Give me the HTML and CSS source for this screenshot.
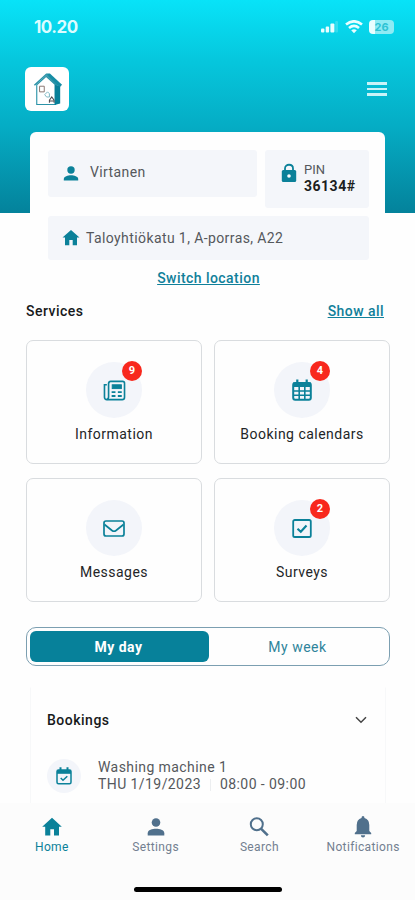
FILE: index.html
```html
<!DOCTYPE html>
<html lang="en">
<head>
  <meta charset="UTF-8" />
  <meta name="viewport" content="width=device-width, initial-scale=1.0" />
  <title>Home</title>
  <link rel="stylesheet" href="styles.css">
</head>
<body>
  <header class="header">
    <div class="status">
      <span class="time">10.20</span>
      <div class="status-icons">
        <svg width="17" height="12" viewBox="0 0 17 12" fill="#e9feff"><rect x="0" y="7.5" width="3.4" height="4" rx="1"/><rect x="4.7" y="5.5" width="3.4" height="6" rx="1"/><rect x="9.4" y="2.5" width="4" height="9" rx="1"/><rect x="14.2" y="0" width="2.8" height="11.5" rx="1" opacity=".2"/></svg>
        <svg width="18" height="14" viewBox="0 0 18 14" fill="none" stroke="#e9feff" stroke-width="2.6"><path d="M1 4.6Q9-2 17 4.6"/><path d="M4 8Q9 3.8 14 8"/><path d="M6.2 10.2Q9 8.2 11.8 10.2L9 13.2Z" fill="#e9feff" stroke="none"/></svg>
        <div class="battery"><span>26</span></div>
      </div>
    </div>
    <div class="topbar">
      <div class="logo">
        <svg width="30" height="35" viewBox="0 0 32 36">
          <path d="M4 13V34H24V13L14 4Z" fill="#fff" stroke="#2b93a8" stroke-width="1.2"/>
          <path d="M23 13L29 14V33L23 34.5Z" fill="#087f98"/>
          <path d="M14 1L18 1L31 13L29 15L24 13Z" fill="#168da5"/>
          <path d="M1.5 13.5L14 2L25 13" fill="none" stroke="#2b93a8" stroke-width="1.6"/>
          <path d="M7 14.5H12V20.5H7Z" fill="none" stroke="#85716b" stroke-width="1"/>
          <path d="M15.5 20.5L12.5 23.5L14.5 26H17.5V22.5Z" fill="none" stroke="#77b4c0" stroke-width="1"/>
          <path d="M17.5 32V29.5L20 26L22.5 29.5V32M17.5 30.3H22.5" fill="none" stroke="#514b50" stroke-width="1.1"/>
        </svg>
      </div>
      <div class="menu"><i></i><i></i><i></i></div>
    </div>
  </header>

  <section class="profile">
    <div class="profile-row">
      <div class="field name">
        <svg width="24" height="24" viewBox="0 0 24 24" fill="#0b8199"><circle cx="12" cy="8" r="3.7"/><path d="M4.8 18.4V17C4.8 14.3 9 13.2 12 13.2S19.2 14.3 19.2 17V18.4Z"/></svg>
        <span class="name-text">Virtanen</span>
      </div>
      <div class="field pin">
        <svg width="16" height="20" viewBox="0 0 16 20"><path d="M4 8V5.5C4 .5 12 .5 12 5.5V8" fill="none" stroke="#0b8199" stroke-width="1.8"/><rect x=".8" y="7" width="14.4" height="12" rx="1.5" fill="#0b8199"/><circle cx="8" cy="13" r="1.8" fill="#fff"/></svg>
        <div class="pin-text"><span>PIN</span><b>36134#</b></div>
      </div>
    </div>
    <div class="field address">
      <svg width="18" height="16" viewBox="0 0 18 16" fill="#0b8199"><path d="M9 0L17.5 7.6H15V15.2H10.7V10H7.3V15.2H3V7.6H.5Z"/></svg>
      <span class="address-text">Taloyhtiökatu 1, A-porras, A22</span>
    </div>
    <a class="switch">Switch location</a>
  </section>

  <main>
    <div class="section-head">
      <h2>Services</h2>
      <a>Show all</a>
    </div>
    <div class="services">
      <div class="card">
        <div class="circle">
          <svg width="23" height="21" viewBox="0 0 24 22" fill="none" stroke="#0b8199" stroke-width="1.7"><path d="M6 3.5Q6 1.5 8 1.5H20.5Q22.5 1.5 22.5 3.5V18Q22.5 20.5 20 20.5H4Q1.5 20.5 1.5 18V5H4"/><path d="M5.8 3V17.5Q5.8 20 4 20.3"/><rect x="9.6" y="5" width="9.6" height="4" fill="#0b8199" stroke-width="1"/><path d="M9 12.7H13M15.5 12.7H19.6M9 16.7H13M15.5 16.7H19.6" stroke-width="2"/></svg>
          <span class="badge">9</span>
        </div>
        <p>Information</p>
      </div>
      <div class="card">
        <div class="circle">
          <svg width="20" height="22" viewBox="0 0 20 22" fill="none" stroke="#0b8199"><rect x="1.2" y="4" width="17.6" height="16.8" rx="2" stroke-width="2"/><path d="M1 3.5H19V8H1Z" fill="#0b8199" stroke="none"/><path d="M5.3 .5V4M14.7 .5V4" stroke-width="2.2"/><path d="M7.2 7V20M12.8 7V20M2 12H18M2 16.3H18" stroke-width="1.6"/></svg>
          <span class="badge">4</span>
        </div>
        <p>Booking calendars</p>
      </div>
      <div class="card">
        <div class="circle">
          <svg width="22" height="17" viewBox="0 0 22 17" fill="none" stroke="#0b8199" stroke-width="1.7"><rect x="1" y="1" width="20" height="15" rx="2"/><path d="M1.5 4.5L9 10.5Q11 12 13 10.5L20.5 4.5"/></svg>
        </div>
        <p>Messages</p>
      </div>
      <div class="card">
        <div class="circle">
          <svg width="20" height="19" viewBox="0 0 20 19" fill="none" stroke="#0b8199" stroke-width="1.8"><rect x="1.2" y="1" width="17.6" height="17" rx="1.6"/><path d="M5.5 9.7L8.8 12.8L14.5 6.5" stroke-width="2.1"/></svg>
          <span class="badge">2</span>
        </div>
        <p>Surveys</p>
      </div>
    </div>

    <div class="toggle">
      <button class="active">My day</button>
      <button>My week</button>
    </div>

    <section class="bookings">
      <div class="bookings-head">
        <h2>Bookings</h2>
        <svg width="12" height="8" viewBox="0 0 12 8" fill="none" stroke="#444" stroke-width="1.5"><path d="M1 1.2L6 6.2L11 1.2"/></svg>
      </div>
      <div class="booking">
        <div class="circle small">
          <svg width="16" height="18" viewBox="0 0 16 18" fill="none" stroke="#0b8199" stroke-width="1.5"><rect x="1" y="3" width="14" height="13.8" rx="1.5"/><path d="M1 3H15V6.8H1Z" fill="#0b8199" stroke="none"/><path d="M4.5 .3V4M11.5 .3V4" stroke-width="2"/><path d="M4.7 11L7 13.3L11.3 9.2" stroke-width="1.5"/></svg>
        </div>
        <div class="booking-text">
          <span>Washing machine 1</span>
          <div class="booking-time"><span>THU 1/19/2023</span><i></i><span>08:00 - 09:00</span></div>
        </div>
      </div>
    </section>
  </main>

  <nav class="tabs">
    <div class="tab current">
      <svg width="20" height="20" viewBox="0 0 20 20" fill="currentColor"><path d="M10 .8L19.8 9.8H17V18.6H12V12.2H8.3V18.6H3.2V9.8H.2Z"/></svg>
      <span>Home</span>
    </div>
    <div class="tab">
      <svg width="20" height="20" viewBox="0 0 20 20" fill="currentColor"><circle cx="10" cy="5.5" r="4.3"/><path d="M1.7 18.5V16.2C1.7 13 6.5 11.8 10 11.8S18.3 13 18.3 16.2V18.5Z"/></svg>
      <span>Settings</span>
    </div>
    <div class="tab">
      <svg width="20" height="20" viewBox="0 0 20 20" fill="none" stroke="currentColor" stroke-width="2"><circle cx="7.8" cy="7.3" r="6"/><path d="M12.2 11.8L18.8 18.4" stroke-width="2.6"/></svg>
      <span>Search</span>
    </div>
    <div class="tab">
      <svg width="20" height="22" viewBox="0 0 20 22" fill="currentColor"><path d="M10 0Q11.5 0 11.5 2Q16.3 3.3 16.3 9V15L18.2 17V18.3H1.8V17L3.7 15V9Q3.7 3.3 8.5 2Q8.5 0 10 0Z"/><path d="M7.8 19.3H12.2Q12 21.5 10 21.5T7.8 19.3Z"/></svg>
      <span>Notifications</span>
    </div>
    <div class="home-bar"></div>
  </nav>
</body>
</html>
```
FILE: styles.css
```css
* {
  box-sizing: border-box;
}
body {
  margin: 0;
  width: 415px;
  height: 900px;
  overflow: hidden;
  background: #fefefe;
  color: #55585c;
  font-family: Roboto, sans-serif;
  font-size: 14px;
  display: flex;
  flex-direction: column;
}
svg {
  display: block;
  flex: none;
}
h2, p {
  margin: 0;
}
.header {
  flex: none;
  height: 213px;
  background: linear-gradient(#08e3f8 0, #06c7dd 60px, #05adc5 125px, #04829b 213px);
}
.status {
  display: flex;
  justify-content: space-between;
  align-items: center;
  height: 54px;
  padding: 0 21px 0 34px;
}
.time {
  color: #dcfcff;
  font-family: Inter, sans-serif;
  font-size: 17px;
  font-weight: 700;
  letter-spacing: -0.5px;
}
.status-icons {
  display: flex;
  align-items: center;
  gap: 7px;
}
.battery {
  width: 25px;
  height: 14px;
  border-radius: 4px;
  background: linear-gradient(90deg, #e9feff 26%, #8eebf4 26%);
  color: #2fc3d4;
  font: 700 11px/14px Inter, sans-serif;
  text-align: center;
  margin-left: -1px;
}
.topbar {
  display: flex;
  justify-content: space-between;
  align-items: center;
  height: 44px;
  margin-top: 13px;
  padding: 0 28px 0 25px;
}
.logo {
  display: flex;
  align-items: center;
  justify-content: center;
  width: 44px;
  height: 44px;
  padding-left: 1px;
  border-radius: 6px;
  background: #fff;
}
.menu {
  display: flex;
  flex-direction: column;
  gap: 3px;
}
.menu i {
  width: 20px;
  height: 2.5px;
  background: #c9f3f8;
}
.profile {
  flex: none;
  width: 355px;
  height: 157px;
  margin: -81px 0 0 30px;
  padding: 18px 16px 0 18px;
  background: #fefefe;
  border-radius: 6px 6px 0 0;
}
.profile-row {
  display: flex;
  align-items: flex-start;
  gap: 8px;
}
.field {
  display: flex;
  background: #f4f6fa;
  border-radius: 3px;
}
.name {
  align-items: center;
  width: 209px;
  height: 47px;
  padding-left: 11px;
}
.name-text {
  margin: -4px 0 0 7px;
  letter-spacing: 0.4px;
}
.pin {
  width: 104px;
  height: 58px;
  padding: 13px 0 0 16px;
  gap: 7px;
}
.pin-text {
  display: flex;
  flex-direction: column;
  margin-top: -1px;
  font-size: 13px;
  line-height: 16px;
}
.pin-text b {
  color: #1c1e20;
  font-size: 14px;
  letter-spacing: 0.5px;
}
.address {
  align-items: center;
  height: 44px;
  margin-top: 8px;
  padding-left: 14px;
}
.address-text {
  margin: -1px 0 0 6px;
  letter-spacing: 0.4px;
}
.switch {
  display: block;
  margin-top: 10px;
  text-align: center;
}
a {
  color: #10809a;
  font-weight: 500;
  letter-spacing: 0.45px;
  text-decoration: underline;
}
main {
  padding: 0 25px 0 26px;
}
.section-head {
  display: flex;
  justify-content: space-between;
  margin-top: 14px;
  padding-right: 6px;
  line-height: 16px;
}
h2 {
  color: #17191b;
  font-size: 14px;
  font-weight: 500;
  letter-spacing: 0.5px;
}
.services {
  display: grid;
  grid-template-columns: 176px 176px;
  gap: 14px 12px;
  margin-top: 21px;
}
.card {
  display: flex;
  flex-direction: column;
  align-items: center;
  height: 124px;
  padding-top: 21px;
  border: 1px solid #d9dcdf;
  border-radius: 7px;
}
.card p {
  margin-top: 8px;
  color: #232527;
  line-height: 16px;
  letter-spacing: 0.48px;
}
.circle {
  position: relative;
  display: flex;
  align-items: center;
  justify-content: center;
  width: 56px;
  height: 56px;
  border-radius: 50%;
  background: #f3f5fa;
}
.badge {
  position: absolute;
  top: -1px;
  right: 0;
  width: 20px;
  height: 20px;
  border-radius: 50%;
  background: #f8281d;
  color: #fff;
  font-size: 11px;
  font-weight: 700;
  line-height: 20px;
  text-align: center;
}
.toggle {
  display: flex;
  height: 39px;
  margin-top: 25px;
  padding: 3px;
  border: 1px solid #7c9fb1;
  border-radius: 10px;
}
.toggle button {
  flex: 1;
  padding: 0;
  border: none;
  border-radius: 6px;
  background: none;
  color: #2f849b;
  font: 400 14px Roboto, sans-serif;
  letter-spacing: 0.5px;
}
.toggle .active {
  background: #07819a;
  color: #fff;
  font-weight: 700;
  padding-right: 2px;
}
.bookings {
  height: 140px;
  margin: 21px 4px 0;
  padding: 24px 18px 0 16px;
  border: 1px solid #f7f8f9;
  border-top-color: transparent;
}
.bookings-head {
  display: flex;
  align-items: center;
  justify-content: space-between;
  line-height: 16px;
}
.booking {
  display: flex;
  margin-top: 31px;
}
.small {
  width: 34px;
  height: 34px;
}
.booking-text {
  margin-left: 17px;
  line-height: 17px;
  letter-spacing: 0.42px;
}
.booking-time {
  display: flex;
  align-items: center;
}
.booking-time i {
  width: 1px;
  height: 12px;
  margin: 0 9px;
  background: #eceef0;
}
.tabs {
  position: fixed;
  top: 803px;
  left: 0;
  display: grid;
  grid-template-columns: repeat(4, 103.75px);
  align-content: start;
  width: 415px;
  height: 97px;
  padding-top: 13px;
  background: #fcfcfc;
}
.tab {
  display: flex;
  flex-direction: column;
  align-items: center;
  height: 71px;
  color: #50708c;
}
.tab svg {
  height: 22px;
}
.tab span {
  margin-top: 2px;
  color: #737f90;
  font-size: 12px;
  line-height: 15px;
  letter-spacing: 0.35px;
}
.current,
.current span {
  color: #0b8199;
}
.home-bar {
  grid-column: 1 / -1;
  justify-self: center;
  width: 148px;
  height: 5px;
  border-radius: 3px;
  background: #000;
}
```
